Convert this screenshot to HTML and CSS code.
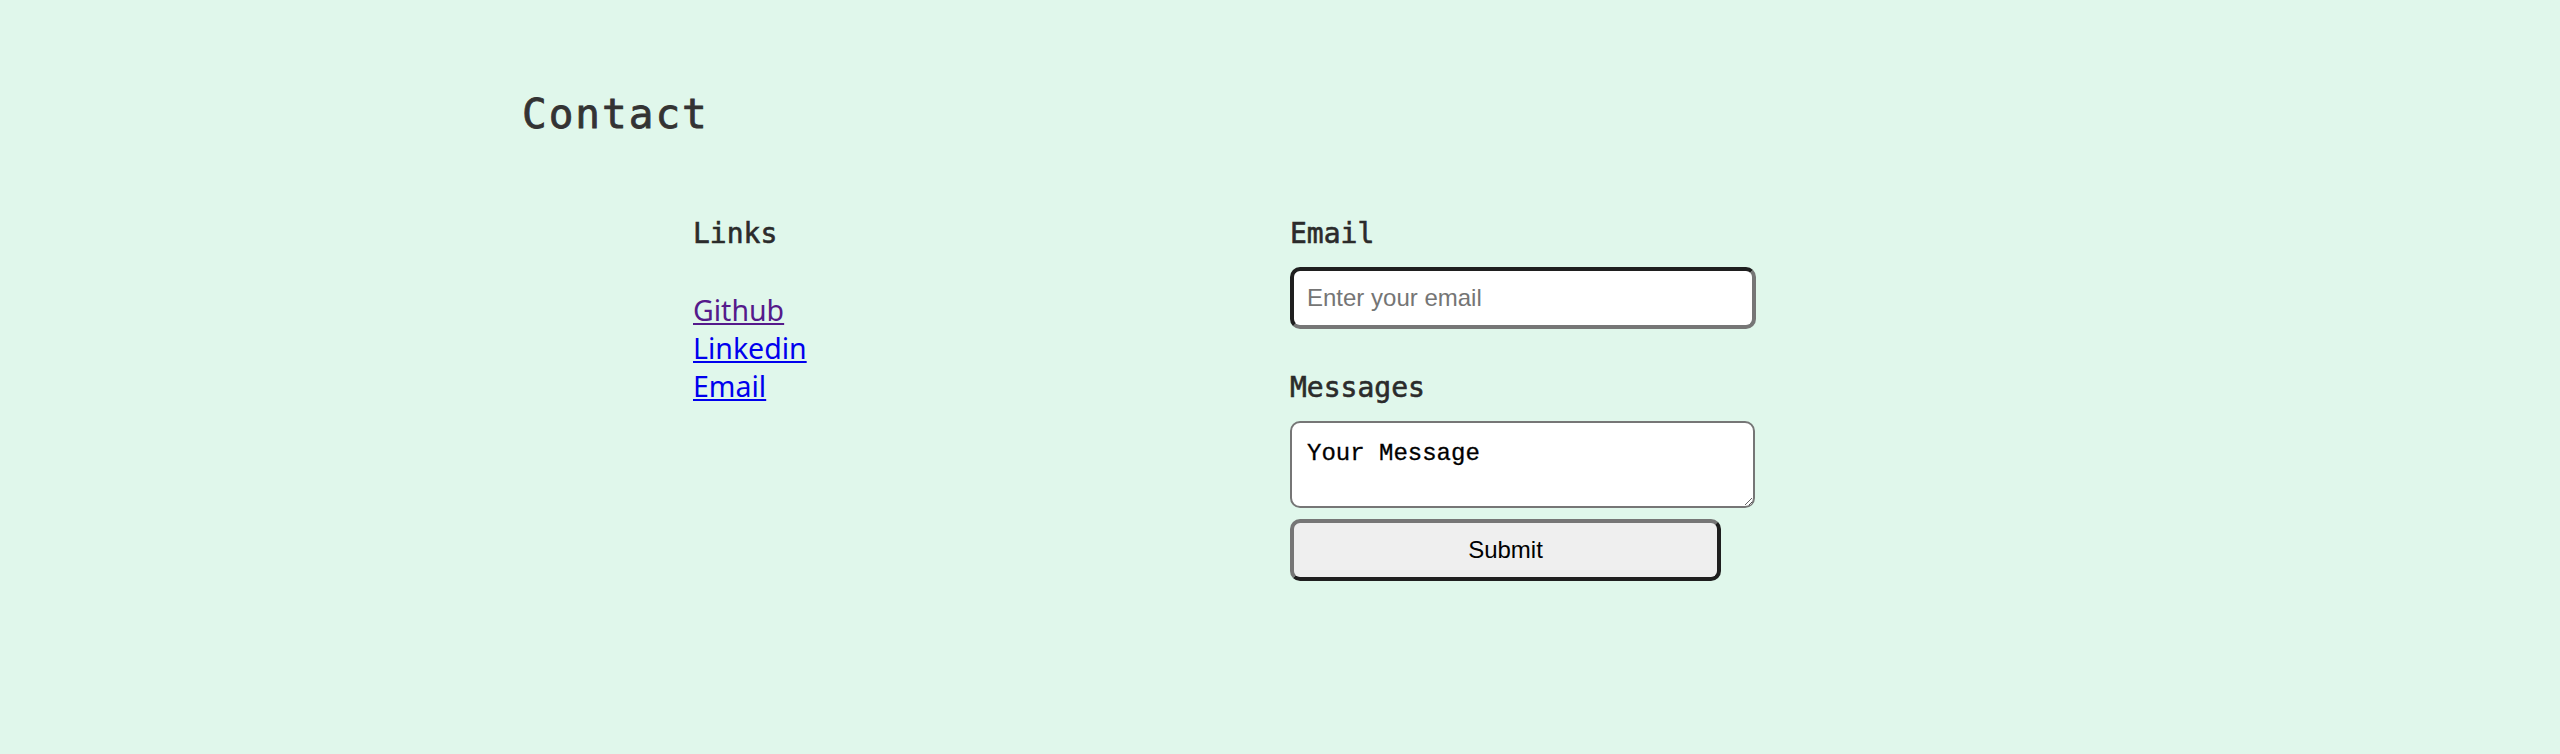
FILE: index.html
```html
<!DOCTYPE html>
<html lang="en">
<head>
<meta charset="utf-8">
<title>Contact</title>
<link rel="stylesheet" href="styles.css">
</head>
<body>
<main class="page">
  <h1 class="title">Contact</h1>
  <div class="row">
    <section class="links">
      <h2 class="heading">Links</h2>
      <ul class="link-list">
        <li><a class="link visited" href="#">Github</a></li>
        <li><a class="link" href="#">Linkedin</a></li>
        <li><a class="link" href="#">Email</a></li>
      </ul>
    </section>
    <form class="form">
      <label class="heading" for="email">Email</label>
      <input class="email-input" id="email" type="email" placeholder="Enter your email">
      <label class="heading messages-label" for="msg">Messages</label>
      <textarea class="message" id="msg">Your Message</textarea>
      <button class="submit" type="button">Submit</button>
    </form>
  </div>
</main>
</body>
</html>
```

FILE: styles.css
```css
html, body {
  margin: 0;
  padding: 0;
  background: #e0f7eb;
}

.page {
  padding: 90px 0 0 522px;
  min-height: 664px;
}

.title {
  margin: 0;
  font-family: "DejaVu Sans Mono", monospace;
  font-weight: normal;
  font-size: 41px;
  line-height: 48px;
  letter-spacing: 2px;
  color: #333333;
  -webkit-text-stroke: 0.8px #333333;
}

.row {
  display: flex;
  margin-top: 79px;
}

.links {
  margin-left: 171px;
  width: 597px;
}

.heading {
  display: block;
  margin: 0;
  font-family: "DejaVu Sans Mono", monospace;
  font-weight: normal;
  font-size: 28px;
  line-height: 34px;
  color: #2b2b2b;
  -webkit-text-stroke: 0.6px #2b2b2b;
}

.link-list {
  list-style: none;
  margin: 40px 0 0;
  padding: 0;
  font-family: "Noto Sans", "Open Sans", sans-serif;
  font-size: 28.5px;
  line-height: 38px;
}

.link {
  color: #0000ee;
}

.link.visited {
  color: #551a8b;
}

.form {
  display: flex;
  flex-direction: column;
  align-items: flex-start;
  width: 465px;
}

.email-input {
  box-sizing: border-box;
  margin-top: 16px;
  width: 466px;
  height: 62px;
  padding: 0 13px;
  border: 4px solid;
  border-top-color: #1f1f1f;
  border-left-color: #1f1f1f;
  border-right-color: #767676;
  border-bottom-color: #767676;
  border-radius: 10px;
  background: #ffffff;
  font-family: "Liberation Sans", Arial, sans-serif;
  font-size: 24px;
  color: #000;
}

.email-input::placeholder {
  color: #757575;
}

.messages-label {
  margin-top: 42px;
}

.message {
  display: block;
  box-sizing: border-box;
  margin-top: 16px;
  width: 465px;
  height: 87px;
  padding: 17px 15px;
  border: 2px solid #767676;
  border-radius: 10px;
  background: #ffffff;
  font-family: "Liberation Mono", monospace;
  font-size: 24px;
  line-height: 27px;
  color: #000;
  -webkit-text-stroke: 0.3px #000;
}

.submit {
  box-sizing: border-box;
  margin-top: 11px;
  width: 431px;
  height: 62px;
  border: 4px solid;
  border-top-color: #767676;
  border-left-color: #767676;
  border-right-color: #1f1f1f;
  border-bottom-color: #1f1f1f;
  border-radius: 10px;
  background: #efefef;
  font-family: "Liberation Sans", Arial, sans-serif;
  font-size: 24px;
  color: #000;
}
```
